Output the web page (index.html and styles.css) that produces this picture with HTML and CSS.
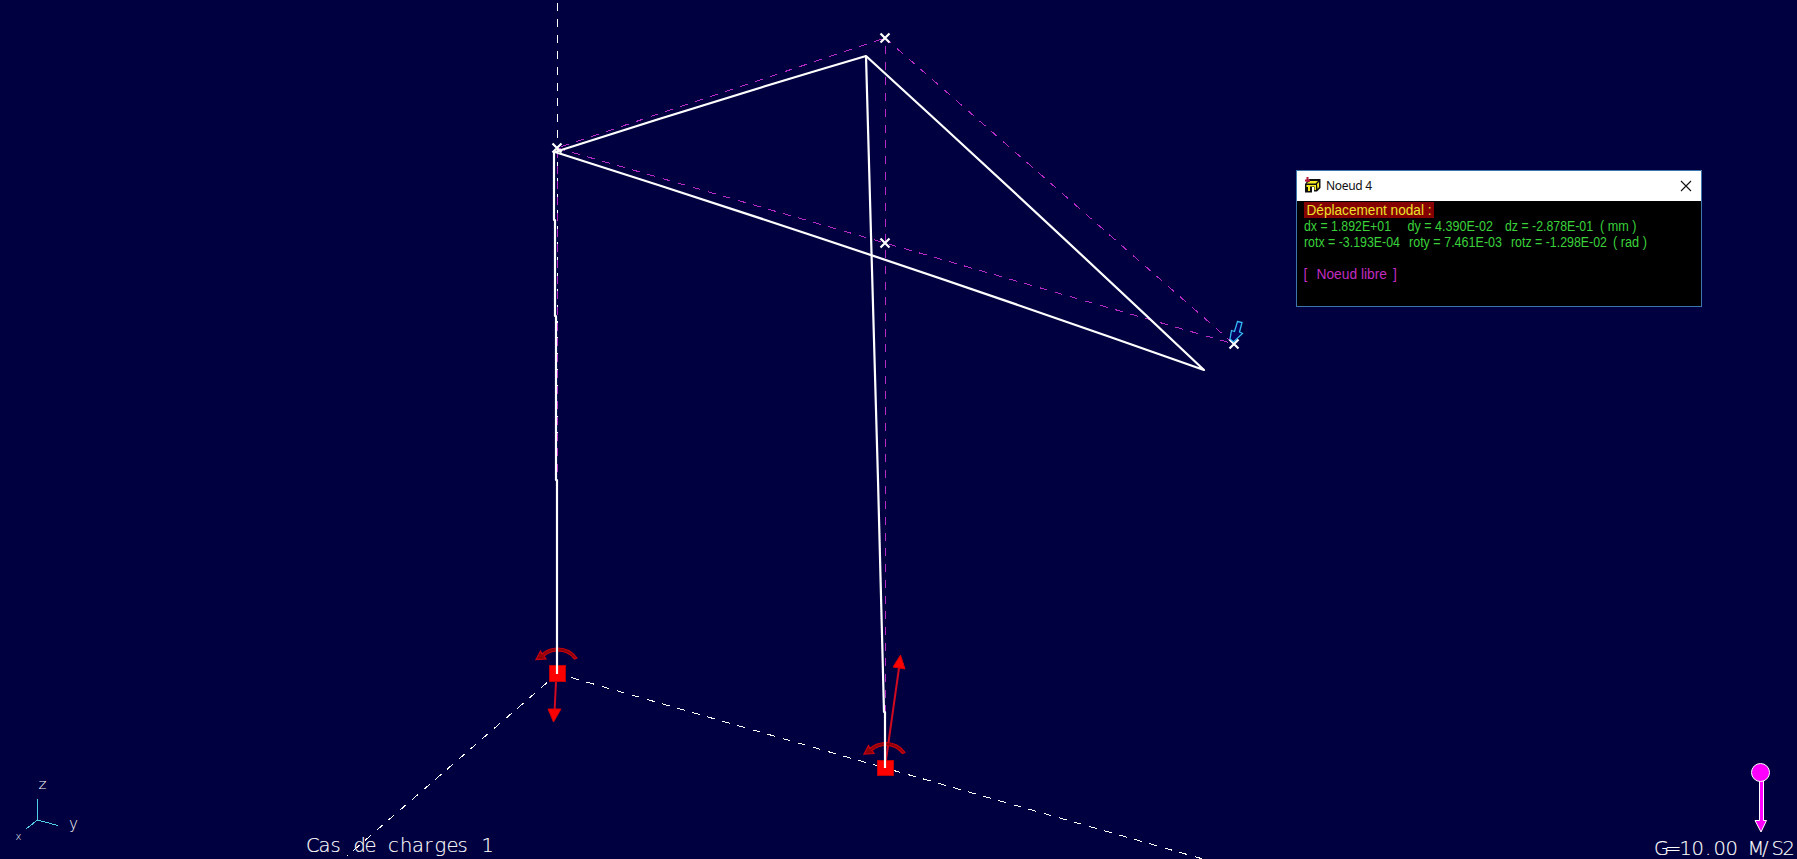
FILE: index.html
```html
<!DOCTYPE html>
<html lang="fr">
<head>
<meta charset="utf-8">
<title>Cas de charges 1</title>
<link rel="stylesheet" href="styles.css">
</head>
<body>
<main class="viewport">
<svg class="scene" width="1797" height="859" viewBox="0 0 1797 859">
  <defs>
    <path id="cross" class="cross" d="M-4.5-4.5L4.5 4.5M4.5-4.5L-4.5 4.5"/>
    <path id="moment" class="moment" d="M20 10Q13 0 1 0Q-9 0 -15 6L-16.500 3L-21 11.500L-11 11L-13 8Q-7 3 1 3Q11 3 17.500 11Z"/>
  </defs>
  <g class="axis-lines">
    <path d="M557.500 3V480" stroke-dasharray="8 7.900"/>
    <path d="M557 674L347 856" stroke-dasharray="8 7.500" stroke-dashoffset="2"/>
    <path d="M557 673.500L885 768" stroke-dasharray="8 7.700" stroke-dashoffset="-15"/>
    <path d="M885 768L1203 859" stroke-dasharray="8 7.700" stroke-dashoffset="-8"/>
  </g>
  <g class="original">
    <path d="M885 38L557 148" stroke-dashoffset="12"/>
    <path d="M557 148L885 243L1234 344"/>
    <path d="M885 38L1234 344"/>
    <path d="M885.500 46V712"/>
    <path d="M557.500 148V480" stroke-dashoffset="-2"/>
  </g>
  <g class="load">
    <path class="load-stem" d="M556 682L554.500 712"/>
    <path class="load-head" d="M548 709H561L553.500 722Z"/>
    <path class="load-stem" d="M886 760L899 668"/>
    <path class="load-head" d="M900.500 655L905 669L893 667Z"/>
    <use href="#moment" x="557" y="648"/>
    <use href="#moment" x="885" y="742.500"/>
    <rect class="support" x="549.500" y="665.500" width="16" height="16"/>
    <rect class="support" x="877.500" y="760.500" width="16" height="15"/>
  </g>
  <g class="deformed">
    <path d="M557 674V480L556 480V316L555 316V220L554 220V152"/>
    <path d="M555 152Q710 102 866 56Q1038 213 1204 370Q880 255 555 152"/>
    <path d="M866 56L871 235L878 480L884 712L885 712V768"/>
  </g>
  <use href="#cross" x="557" y="148"/>
  <use href="#cross" x="885" y="38"/>
  <use href="#cross" x="885" y="243"/>
  <use href="#cross" x="1234" y="344"/>
  <path class="pointer" d="M1237.500 321.500L1242 322.500L1239.500 332L1242.500 333.500L1233.500 342L1230 339L1231.500 330.500L1234.500 331.500Z"/>
  <g class="triad">
    <path d="M37.500 799V820L58 825.500M37.500 820L26 829"/>
    <text x="38.500" y="789" font-size="14" textLength="8" lengthAdjust="spacingAndGlyphs">z</text>
    <text x="69" y="829" font-size="15" textLength="9" lengthAdjust="spacingAndGlyphs">y</text>
    <text x="15.500" y="840" font-size="11" textLength="6" lengthAdjust="spacingAndGlyphs">x</text>
  </g>
  <g class="gravity">
    <path d="M1759.500 780H1763.500V820.500H1766.500L1761 832L1755 820.500H1759.500Z"/>
    <circle cx="1760.500" cy="772.500" r="9"/>
  </g>
  <g class="caption">
    <text y="851.500" x="306 318.500 330.500 341 353.500 364.500 376 388 400 412 424.500 434.500 446.500 457.500 471 481.500">Cas de charges 1</text>
    <text y="854.500" x="1654 1665 1679.500 1691.500 1705 1713.500 1725.500 1738 1747.500 1762 1771.500 1782.500">G=10.00 M/S2</text>
  </g>
</svg>
<section class="dialog">
  <header class="titlebar">
    <svg class="app-icon" width="17" height="17" viewBox="0 0 17 17">
      <path d="M1 7L5 2H16.500V11L13 14.500H10V10H8V15.500H1V10Z" fill="#111"/>
      <path d="M2.500 6.500L6 4H14L11.500 6.500ZM2.500 8H12V13H10.500V9.500H6V14H4V10H2.500ZM13 7L15 5V10L13.500 12Z" fill="#f5eb24"/>
      <path d="M3.500 0V5M1 3.500H6" stroke="#b3153b" stroke-width="2"/>
    </svg>
    <span class="title">Noeud 4</span>
    <svg class="close" width="12" height="12" viewBox="0 0 12 12"><path d="M1 1L11 11M11 1L1 11"/></svg>
  </header>
  <svg class="readout" width="404" height="105" viewBox="1297 201 404 105">
    <rect x="1304" y="202" width="130" height="16" fill="#850000"/>
    <text class="heading" x="1306.500" y="215" textLength="125" lengthAdjust="spacingAndGlyphs">Déplacement nodal :</text>
    <g class="values">
      <text x="1304" y="231" textLength="87" lengthAdjust="spacingAndGlyphs">dx = 1.892E+01</text>
      <text x="1407.500" y="231" textLength="85.500" lengthAdjust="spacingAndGlyphs">dy = 4.390E-02</text>
      <text x="1505" y="231" textLength="88" lengthAdjust="spacingAndGlyphs">dz = -2.878E-01</text>
      <text x="1600" y="231" textLength="36.500" lengthAdjust="spacingAndGlyphs">( mm )</text>
      <text x="1304" y="247" textLength="96" lengthAdjust="spacingAndGlyphs">rotx = -3.193E-04</text>
      <text x="1409" y="247" textLength="93" lengthAdjust="spacingAndGlyphs">roty = 7.461E-03</text>
      <text x="1511" y="247" textLength="96" lengthAdjust="spacingAndGlyphs">rotz = -1.298E-02</text>
      <text x="1613" y="247" textLength="34" lengthAdjust="spacingAndGlyphs">( rad )</text>
    </g>
    <g class="status">
      <text x="1303.500" y="279">[</text>
      <text x="1316.500" y="279" textLength="70.500" lengthAdjust="spacingAndGlyphs">Noeud libre</text>
      <text x="1393" y="279">]</text>
    </g>
  </svg>
</section>
</main>
</body>
</html>
```
FILE: styles.css
```css
body { margin: 0; background: #000040; overflow: hidden; }
.viewport { position: relative; width: 1797px; height: 859px; }
.scene, .readout { display: block; }
.axis-lines path { fill: none; stroke: #fff; stroke-width: 1; shape-rendering: crispEdges; }
.original path { fill: none; stroke: #b42bc4; stroke-width: 1; stroke-dasharray: 8 7.7; shape-rendering: crispEdges; }
.deformed path { fill: none; stroke: #fff; stroke-width: 2.2; stroke-linejoin: round; }
.cross { stroke: #fff; stroke-width: 2.2; }
.support { fill: #f00; stroke: #c00008; }
.load-stem { stroke: #d00a20; stroke-width: 2; }
.load-head { fill: #f00; stroke: #d00008; stroke-width: 1; }
.moment { fill: #8d0008; stroke: #cc0010; stroke-width: 1.2; }
.pointer { fill: #000060; stroke: #35b9f0; stroke-width: 1.3; }
.triad path { fill: none; stroke: #4fd0e8; stroke-width: 1; shape-rendering: crispEdges; }
.triad text, .caption text { font-family: "DejaVu Sans", "Liberation Sans", sans-serif; font-weight: 200; fill: #fff; }
.caption text { font-size: 19.5px; white-space: pre; stroke: #fff; stroke-width: 0.15; }
.gravity { fill: #f0f; stroke: #fff; stroke-width: 1; }
.dialog { position: absolute; left: 1296px; top: 170px; width: 404px; height: 135px; border: 1px solid #3c76ac; background: #000; }
.titlebar { display: flex; align-items: center; height: 30px; box-sizing: border-box; padding: 0 9px 1px 7px; background: #fff; }
.title { flex: 1; margin-left: 5px; font: 12px "Noto Sans", "Open Sans", sans-serif; letter-spacing: -0.3px; color: #111; }
.close path { stroke: #111; stroke-width: 1.1; }
.readout text { font-family: "Liberation Sans", sans-serif; font-size: 13.8px; }
.heading { fill: #eee02c; }
.values { fill: #3bd03b; }
.status { fill: #c02cc0; }
```
